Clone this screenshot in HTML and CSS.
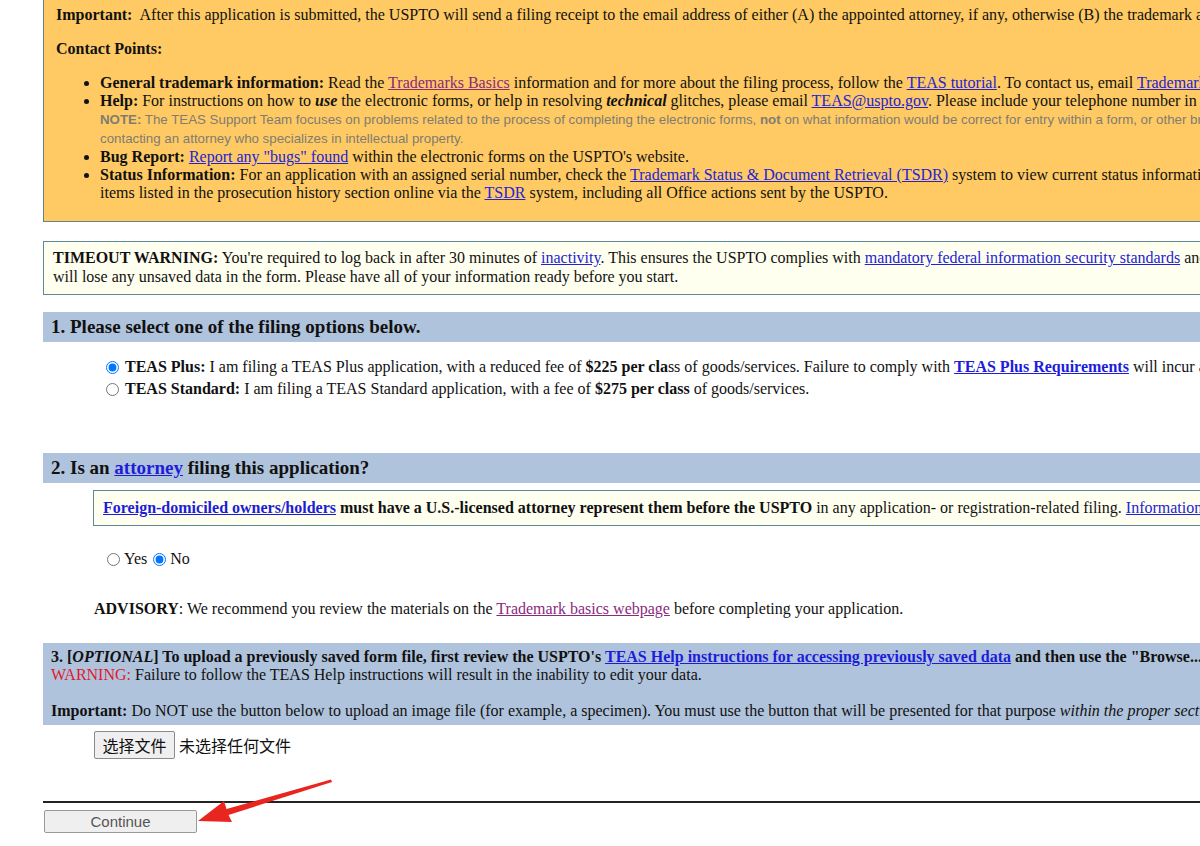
FILE: index.html
```html
<!DOCTYPE html>
<html>
<head>
    <title>TEAS - Initial Application Form</title>
    <link rel="stylesheet" href="styles.css">
</head>
<body>
    <div class="page">
        <div class="notice">
            <p><b>Important:</b>&nbsp; After this application is submitted, the USPTO will send a filing receipt to the email address of either (A) the appointed attorney, if any, otherwise (B) the trademark applicant, at the address provided in the form.</p>
            <p><b>Contact Points:</b></p>
            <ul>
                <li><b>General trademark information:</b> Read the <a class="visited" href="#">Trademarks Basics</a> information and for more about the filing process, follow the <a href="#">TEAS tutorial</a>. To contact us, email <a href="#">TrademarkAssistanceCenter@uspto.gov</a> or call 1-800-786-9199.</li>
                <li><b>Help:</b> For instructions on how to <b><i>use</i></b> the electronic forms, or help in resolving <b><i>technical</i></b> glitches, please email <a href="#">TEAS@uspto.gov</a>. Please include your telephone number in your e-mail, so we can talk to you directly, if necessary.<br>
                    <span class="note"><b>NOTE:</b> The TEAS Support Team focuses on problems related to the process of completing the electronic forms, <b>not</b> on what information would be correct for entry within a form, or other broader legal questions. For such issues, consider<br>contacting an attorney who specializes in intellectual property.</span></li>
                <li><b>Bug Report:</b> <a href="#">Report any "bugs" found</a> within the electronic forms on the USPTO's website.</li>
                <li><b>Status Information:</b> For an application with an assigned serial number, check the <a href="#">Trademark Status &amp; Document Retrieval (TSDR)</a> system to view current status information, and to view and download<br>items listed in the prosecution history section online via the <a href="#">TSDR</a> system, including all Office actions sent by the USPTO.</li>
            </ul>
        </div>

        <div class="timeout">
            <b>TIMEOUT WARNING:</b> You're required to log back in after 30 minutes of <a href="#">inactivity</a>. This ensures the USPTO complies with <a href="#">mandatory federal information security standards</a> and protects your data. If you are logged out, you<br>will lose any unsaved data in the form. Please have all of your information ready before you start.
        </div>

        <div class="section-head">1. Please select one of the filing options below.</div>
        <div class="options">
            <label class="option"><input type="radio" name="filing" checked> <span><b>TEAS Plus:</b> I am filing a TEAS Plus application, with a reduced fee of <b>$225 per cla</b>ss of goods/services. Failure to comply with <a class="strong" href="#">TEAS Plus Requirements</a> will incur additional fees.</span></label>
            <label class="option"><input type="radio" name="filing"> <span><b>TEAS Standard:</b> I am filing a TEAS Standard application, with a fee of <b>$275 per class</b> of goods/services.</span></label>
        </div>

        <div class="section-head">2. Is an <a class="strong" href="#">attorney</a> filing this application?</div>
        <div class="foreign">
            <a class="strong" href="#">Foreign-domiciled owners/holders</a> <b>must have a U.S.-licensed attorney represent them before the USPTO</b> in any application- or registration-related filing. <a href="#">Information</a>
        </div>
        <div class="yesno">
            <label><input type="radio" name="attorney"> Yes</label>
            <label><input type="radio" name="attorney" checked> No</label>
        </div>
        <p class="advisory"><b>ADVISORY</b>: We recommend you review the materials on the <a class="visited" href="#">Trademark basics webpage</a> before completing your application.</p>

        <div class="upload-info">
            <b>3. [<i>OPTIONAL</i>] To upload a previously saved form file, first review the USPTO's <a class="strong" href="#">TEAS Help instructions for accessing previously saved data</a> and then use the "Browse..." button below.</b><br>
            <span class="warn">WARNING:</span> Failure to follow the TEAS Help instructions will result in the inability to edit your data.<br>
            <br>
            <b>Important:</b> Do NOT use the button below to upload an image file (for example, a specimen). You must use the button that will be presented for that purpose <i>within the proper section of the form</i>.
        </div>
        <div class="file-row">
            <button type="button" class="file-btn">选择文件</button>
            <span class="file-name">未选择任何文件</span>
        </div>

        <hr class="divider">
        <button type="button" class="continue">Continue</button>

        <svg class="arrow" width="140" height="55" viewBox="0 0 140 55">
            <polygon points="2,46 36,47 32.5,40 136,7 135,4.5 30.5,34 28,26" fill="#e8251f"/>
        </svg>
    </div>
</body>
</html>
```

FILE: styles.css
```css
html, body {
    margin: 0;
    overflow: hidden;
}
body {
    font-family: "Liberation Serif", "Times New Roman", serif;
    font-size: 16px;
    line-height: 18px;
    color: #111;
    background: #fff;
}
a {
    color: #2323d6;
}
a.visited {
    color: #8a2a7e;
}
a.strong {
    font-weight: bold;
    color: #1d1dd9;
}
.page {
    position: relative;
    width: 1600px;
    padding-left: 43px;
    white-space: nowrap;
}
.notice {
    background: #ffca63;
    border: 1px solid #62828c;
    border-top: none;
    padding: 6px 12px 19px;
}
.notice p {
    margin: 0 0 16px;
}
.notice ul {
    margin: 0;
    padding-left: 44px;
}
.note {
    font-family: "Liberation Sans", Tahoma, sans-serif;
    font-size: 13.3px;
    color: #807c72;
}
.timeout {
    margin-top: 19px;
    background: #fffff0;
    border: 1px solid #5f8a95;
    padding: 6px 9px 8px;
    line-height: 19px;
}
.section-head {
    margin-top: 17px;
    background: #b0c3dc;
    height: 30px;
    line-height: 30px;
    padding-left: 8px;
    font-weight: bold;
    font-size: 19px;
}
.options {
    padding: 14px 0 0 62px;
    height: 80px;
}
.option {
    display: flex;
    align-items: center;
    height: 22px;
}
input[type=radio] {
    width: 13px;
    height: 13px;
    margin: 0 6px 0 1px;
}
.foreign {
    margin: 7px 0 0 50px;
    background: #fffff0;
    border: 1px solid #5f8a95;
    padding: 8px 9px 8px;
}
.yesno {
    display: flex;
    gap: 5px;
    padding: 24px 0 0 63px;
}
.yesno label {
    display: flex;
    align-items: center;
}
.yesno input[type=radio] {
    margin-right: 4px;
}
.advisory {
    margin: 32px 0 0 51px;
}
.upload-info {
    margin-top: 25px;
    background: #b0c3dc;
    padding: 5px 8px 5px;
}
.warn {
    color: #e0182d;
}
.file-row {
    display: flex;
    align-items: center;
    gap: 4px;
    padding: 6px 0 0 51px;
    font-family: "Noto Sans CJK SC", sans-serif;
    font-size: 16px;
}
.file-btn {
    font-family: "Noto Sans CJK SC", sans-serif;
    font-size: 16px;
    height: 28px;
    width: 81px;
    padding: 0;
    background: #efefef;
    border: 1px solid #8a8a8a;
    border-radius: 2px;
    color: #111;
}
.divider {
    margin: 42px 0 0;
    border: none;
    border-top: 2px solid #222;
}
.continue {
    margin: 7px 0 0 1px;
    width: 153px;
    height: 23px;
    background: #efefef;
    border: 1px solid #9a9a9a;
    border-radius: 2px;
    font-family: "Liberation Sans", Arial, sans-serif;
    font-size: 15px;
    color: #555;
}
.arrow {
    position: absolute;
    left: 196px;
    top: 775px;
}
```
